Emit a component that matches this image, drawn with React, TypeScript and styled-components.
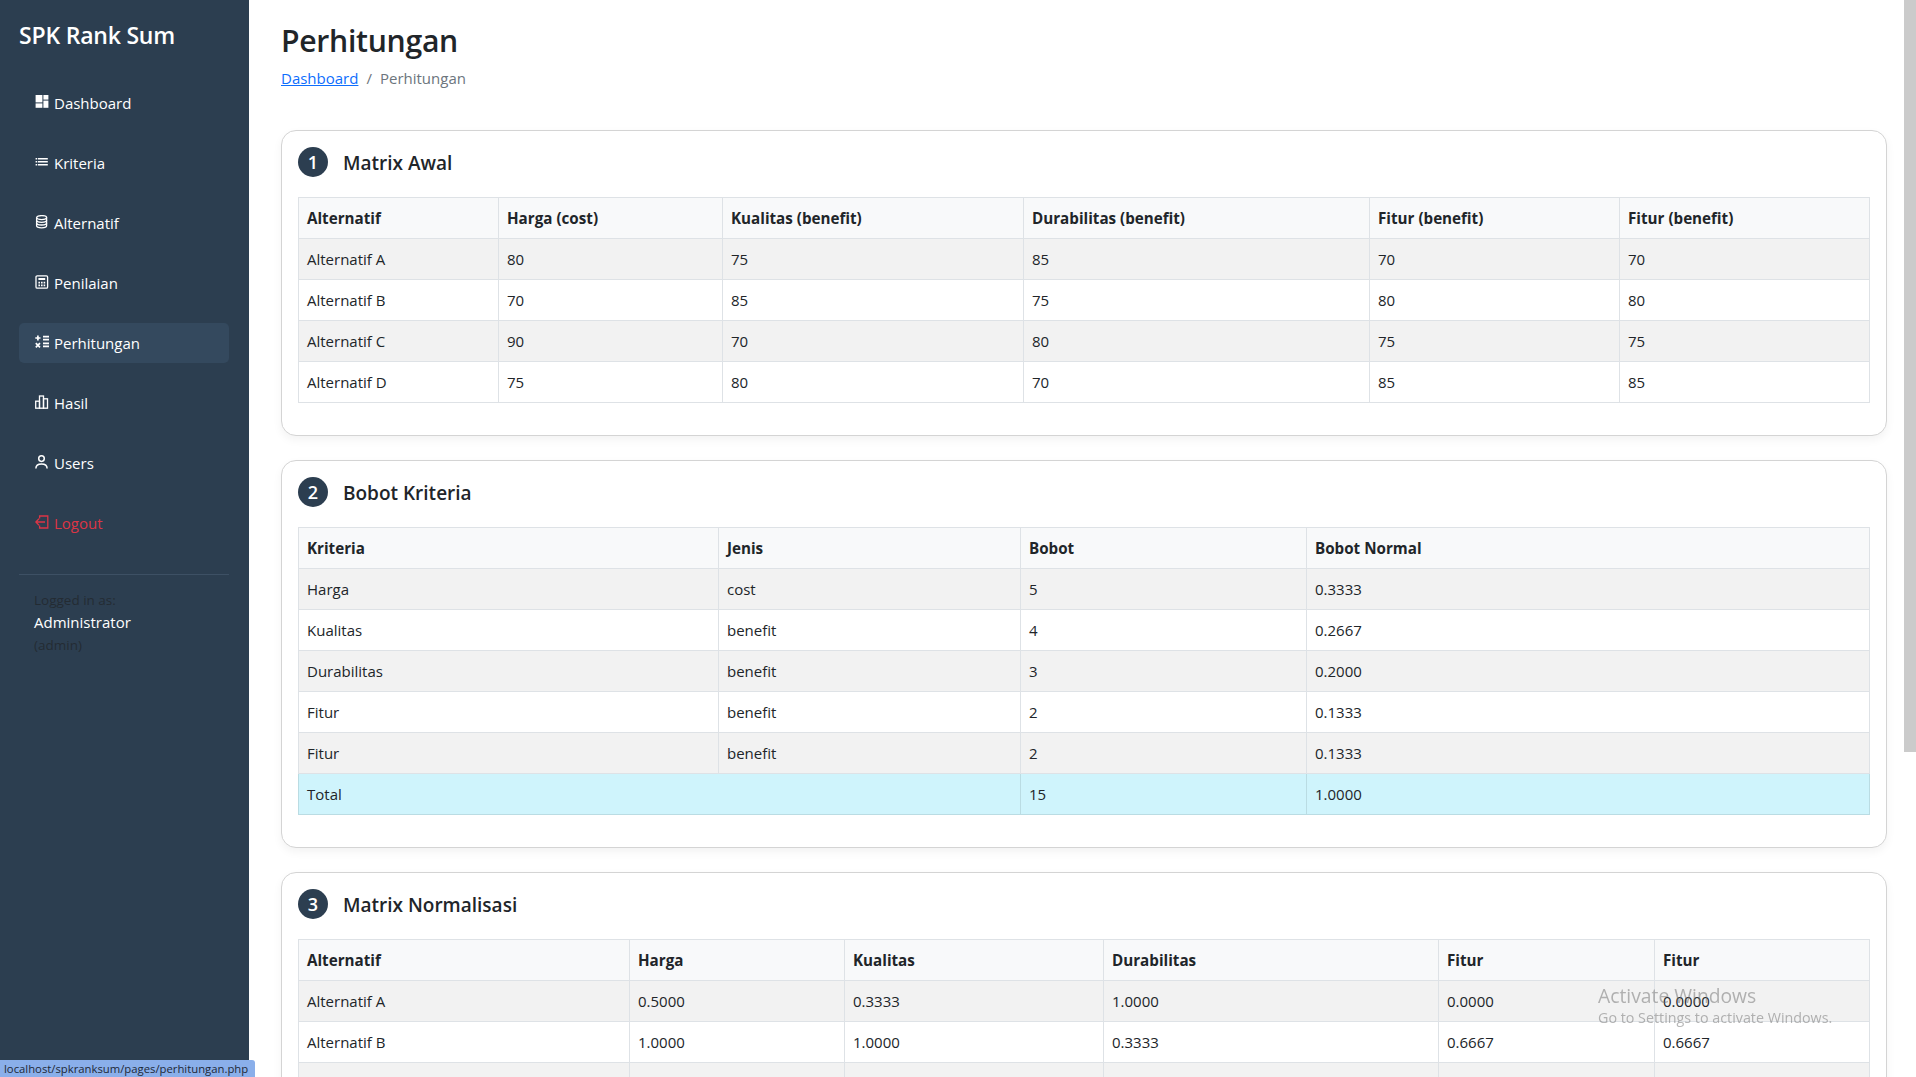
import React from "react";
import styled, { createGlobalStyle } from "styled-components";

const Global = createGlobalStyle`
  html, body { margin: 0; padding: 0; height: 100%; overflow: hidden; background: #fff; }
  body { font-family: "Open Sans", "Liberation Sans", sans-serif; font-size: 15px; line-height: 24px; color: #212529; }
  * { box-sizing: border-box; }
`;

const Shell = styled.div`
  display: flex;
  height: 100vh;
  overflow: hidden;
`;

const Sidebar = styled.aside`
  flex: 0 0 249px;
  background: #2c3e50;
  color: #fff;
  padding: 20px 20px 20px 19px;
`;

const Brand = styled.div`
  font-size: 23px;
  font-weight: 600;
  line-height: 30px;
  margin-bottom: 33px;
  letter-spacing: -0.2px;
`;

const NavList = styled.nav`
  display: flex;
  flex-direction: column;
  gap: 20px;
`;

const NavLink = styled.a<{ $active?: boolean; $danger?: boolean }>`
  display: flex;
  align-items: center;
  gap: 5px;
  height: 40px;
  padding: 0 16px;
  border-radius: 5px;
  color: ${(p) => (p.$danger ? "#dc3545" : "#fff")};
  background: ${(p) => (p.$active ? "#34495e" : "transparent")};
  svg {
    flex: 0 0 14px;
    width: 14px;
    height: 14px;
    margin-top: -3px;
  }
`;

const Divider = styled.hr`
  border: 0;
  border-top: 1px solid #3d5064;
  margin: 31px 0 15px;
`;

const UserBox = styled.div`
  padding: 0 15px;
`;

const Muted = styled.div`
  font-size: 13.5px;
  line-height: 21px;
  color: rgba(33, 37, 41, 0.75);
`;

const UserName = styled.div`
  font-size: 15px;
  line-height: 24px;
  margin: -1px 0 1px;
  color: #fff;
`;

const Main = styled.main`
  flex: 1;
  min-width: 0;
  padding: 20px 17px 0 32px;
  overflow: hidden;
`;

const PageTitle = styled.h1`
  font-size: 30.2px;
  font-weight: 600;
  line-height: 42px;
  margin: 0 0 4px;
  letter-spacing: -0.3px;
`;

const Crumbs = styled.div`
  display: flex;
  gap: 8px;
  margin-bottom: 40px;
  color: #6c757d;
  a {
    color: #0d6efd;
    text-decoration: underline;
  }
`;

const Card = styled.section`
  background: #fff;
  border: 1px solid #d4d4d4;
  border-radius: 15px;
  box-shadow: 0 4px 10px rgba(0, 0, 0, 0.05);
  padding: 16px;
  margin-bottom: 24px;
`;

const CardHead = styled.div`
  display: flex;
  align-items: center;
  gap: 15px;
  height: 30px;
  margin-bottom: 20px;
`;

const StepBadge = styled.span`
  width: 30px;
  height: 30px;
  border-radius: 50%;
  background: #2c3e50;
  color: #fff;
  font-size: 18px;
  font-weight: 600;
  display: flex;
  align-items: center;
  justify-content: center;
`;

const CardTitle = styled.h2`
  font-size: 19px;
  font-weight: 600;
  line-height: 24px;
  margin: 2px 0 0;
`;

const Table = styled.table`
  width: 1571px;
  table-layout: fixed;
  border-collapse: collapse;
  margin-bottom: 16px;
`;

const Th = styled.th`
  background: #f8f9fa;
  border: 1px solid #dee2e6;
  padding: 8px;
  height: 41px;
  text-align: left;
  font-weight: 700;
  font-size: 15.2px;
`;

const Td = styled.td<{ $total?: boolean }>`
  border: 1px solid ${(p) => (p.$total ? "#badce3" : "#dee2e6")};
  padding: 8px;
  height: 41px;
  background: ${(p) => (p.$total ? "#cff4fc" : "transparent")};
`;

const Tr = styled.tr<{ $striped?: boolean }>`
  background: ${(p) => (p.$striped ? "#f2f2f2" : "#fff")};
`;

const ScrollTrack = styled.div`
  flex: 0 0 12px;
  background: #fff;
`;

const ScrollThumb = styled.div`
  height: 752px;
  background: #cbcbcb;
`;

const Watermark = styled.div`
  position: fixed;
  left: 1598px;
  top: 984px;
  color: rgba(110, 110, 110, 0.5);
  pointer-events: none;
`;

const WatermarkTitle = styled.div`
  font-size: 19.3px;
  line-height: 24px;
`;

const WatermarkSub = styled.div`
  font-size: 14.3px;
  line-height: 20px;
`;

const StatusLink = styled.div`
  position: fixed;
  left: 0;
  bottom: 0;
  width: 255px;
  height: 17px;
  padding-left: 4px;
  background: #8aafea;
  border-top-right-radius: 3px;
  color: #1c2736;
  font-size: 11.3px;
  line-height: 18px;
  white-space: nowrap;
  overflow: hidden;
`;

const Line = ({ children }: { children: React.ReactNode }) => (
  <svg viewBox="0 0 14 14" fill="none" stroke="currentColor" strokeWidth="1.3">
    {children}
  </svg>
);

const DashIcon = () => (
  <svg viewBox="0 0 14 14" fill="currentColor">
    <rect x="0.6" y="0" width="6.8" height="7.4" />
    <rect x="8.4" y="0" width="5" height="4.6" />
    <rect x="0.6" y="8.4" width="6.8" height="4.4" />
    <rect x="8.4" y="5.6" width="5" height="7.2" />
  </svg>
);

const ListIcon = () => (
  <svg viewBox="0 0 14 14" fill="currentColor">
    <rect x="0.6" y="3" width="1.6" height="1.5" />
    <rect x="0.6" y="6" width="1.6" height="1.5" />
    <rect x="0.6" y="9" width="1.6" height="1.5" />
    <rect x="3" y="3" width="9.8" height="1.5" />
    <rect x="3" y="6" width="9.8" height="1.5" />
    <rect x="3" y="9" width="9.8" height="1.5" />
  </svg>
);

const DbIcon = () => (
  <Line>
    <ellipse cx="6.6" cy="2.6" rx="5" ry="2" />
    <path d="M1.6 2.6v8.2c0 1.1 2.2 2 5 2s5-.9 5-2V2.6" />
    <path d="M1.6 5.3c0 1.1 2.2 2 5 2s5-.9 5-2M1.6 8c0 1.1 2.2 2 5 2s5-.9 5-2" />
  </Line>
);

const CalcIcon = () => (
  <Line>
    <rect x="1" y="0.8" width="11.6" height="12.4" rx="1.2" />
    <rect x="3.4" y="3" width="6.8" height="2" fill="currentColor" stroke="none" />
    <path d="M3.4 7.6h6.8M3.4 10.4h6.8" strokeDasharray="1.6 1" strokeWidth="1.6" />
  </Line>
);

const OpsIcon = () => (
  <svg viewBox="0 0 14 14" fill="none" stroke="currentColor" strokeWidth="1.7">
    <path d="M2.9 0.4v5.2M0.3 3h5.2" />
    <path d="M0.8 8.2l4.2 4.2M5 8.2l-4.2 4.2" />
    <path d="M8 1.6h6M8 4.6h6M8 8.4h6M8 11.4h6" />
  </svg>
);

const ChartIcon = () => (
  <Line>
    <rect x="0.7" y="6.2" width="3.8" height="7" />
    <rect x="4.5" y="1" width="4" height="12.2" />
    <rect x="8.5" y="3.8" width="4" height="9.4" />
  </Line>
);

const PersonIcon = () => (
  <svg viewBox="0 0 14 14" fill="none" stroke="currentColor" strokeWidth="1.5">
    <circle cx="6.5" cy="3.6" r="2.8" />
    <path d="M0.9 13.4c0-3 2.4-4.4 5.6-4.4s5.6 1.4 5.6 4.4" />
  </svg>
);

const LogoutIcon = () => (
  <Line>
    <path d="M4.6 3.4V1h8.2v12H4.6v-2.4" />
    <path d="M10 7H1M4 3.8L.8 7 4 10.2" />
  </Line>
);

const navItems = [
  { label: "Dashboard", icon: <DashIcon /> },
  { label: "Kriteria", icon: <ListIcon /> },
  { label: "Alternatif", icon: <DbIcon /> },
  { label: "Penilaian", icon: <CalcIcon /> },
  { label: "Perhitungan", icon: <OpsIcon />, active: true },
  { label: "Hasil", icon: <ChartIcon /> },
  { label: "Users", icon: <PersonIcon /> },
  { label: "Logout", icon: <LogoutIcon />, danger: true },
];

type TableData = { widths: number[]; head: string[]; rows: string[][] };

const matrixAwal: TableData = {
  widths: [200, 224, 301, 346, 250, 250],
  head: ["Alternatif", "Harga (cost)", "Kualitas (benefit)", "Durabilitas (benefit)", "Fitur (benefit)", "Fitur (benefit)"],
  rows: [
    ["Alternatif A", "80", "75", "85", "70", "70"],
    ["Alternatif B", "70", "85", "75", "80", "80"],
    ["Alternatif C", "90", "70", "80", "75", "75"],
    ["Alternatif D", "75", "80", "70", "85", "85"],
  ],
};

const bobot: TableData = {
  widths: [420, 302, 286, 563],
  head: ["Kriteria", "Jenis", "Bobot", "Bobot Normal"],
  rows: [
    ["Harga", "cost", "5", "0.3333"],
    ["Kualitas", "benefit", "4", "0.2667"],
    ["Durabilitas", "benefit", "3", "0.2000"],
    ["Fitur", "benefit", "2", "0.1333"],
    ["Fitur", "benefit", "2", "0.1333"],
  ],
};

const normal: TableData = {
  widths: [331, 215, 259, 335, 216, 215],
  head: ["Alternatif", "Harga", "Kualitas", "Durabilitas", "Fitur", "Fitur"],
  rows: [
    ["Alternatif A", "0.5000", "0.3333", "1.0000", "0.0000", "0.0000"],
    ["Alternatif B", "1.0000", "1.0000", "0.3333", "0.6667", "0.6667"],
    ["Alternatif C", "0.0000", "0.0000", "0.6667", "0.3333", "0.3333"],
    ["Alternatif D", "0.7500", "0.6667", "0.0000", "1.0000", "1.0000"],
  ],
};

const DataTable = ({ data, total }: { data: TableData; total?: string[] }) => (
  <Table>
    <colgroup>
      {data.widths.map((w, i) => (
        <col key={i} width={w} />
      ))}
    </colgroup>
    <thead>
      <tr>
        {data.head.map((h, i) => (
          <Th key={i}>{h}</Th>
        ))}
      </tr>
    </thead>
    <tbody>
      {data.rows.map((r, i) => (
        <Tr key={i} $striped={i % 2 === 0}>
          {r.map((c, j) => (
            <Td key={j}>{c}</Td>
          ))}
        </Tr>
      ))}
      {total && (
        <tr>
          <Td $total colSpan={2}>{total[0]}</Td>
          <Td $total>{total[1]}</Td>
          <Td $total>{total[2]}</Td>
        </tr>
      )}
    </tbody>
  </Table>
);

const Section = ({ n, title, children }: { n: number; title: string; children: React.ReactNode }) => (
  <Card>
    <CardHead>
      <StepBadge>{n}</StepBadge>
      <CardTitle>{title}</CardTitle>
    </CardHead>
    {children}
  </Card>
);

export default function App() {
  return (
    <Shell>
      <Global />
      <Sidebar>
        <Brand>SPK Rank Sum</Brand>
        <NavList>
          {navItems.map((it) => (
            <NavLink key={it.label} $active={it.active} $danger={it.danger}>
              {it.icon}
              {it.label}
            </NavLink>
          ))}
        </NavList>
        <Divider />
        <UserBox>
          <Muted>Logged in as:</Muted>
          <UserName>Administrator</UserName>
          <Muted>(admin)</Muted>
        </UserBox>
      </Sidebar>
      <Main>
        <PageTitle>Perhitungan</PageTitle>
        <Crumbs>
          <a>Dashboard</a>
          <span>/</span>
          <span>Perhitungan</span>
        </Crumbs>
        <Section n={1} title="Matrix Awal">
          <DataTable data={matrixAwal} />
        </Section>
        <Section n={2} title="Bobot Kriteria">
          <DataTable data={bobot} total={["Total", "15", "1.0000"]} />
        </Section>
        <Section n={3} title="Matrix Normalisasi">
          <DataTable data={normal} />
        </Section>
      </Main>
      <ScrollTrack>
        <ScrollThumb />
      </ScrollTrack>
      <Watermark>
        <WatermarkTitle>Activate Windows</WatermarkTitle>
        <WatermarkSub>Go to Settings to activate Windows.</WatermarkSub>
      </Watermark>
      <StatusLink>localhost/spkranksum/pages/perhitungan.php</StatusLink>
    </Shell>
  );
}
